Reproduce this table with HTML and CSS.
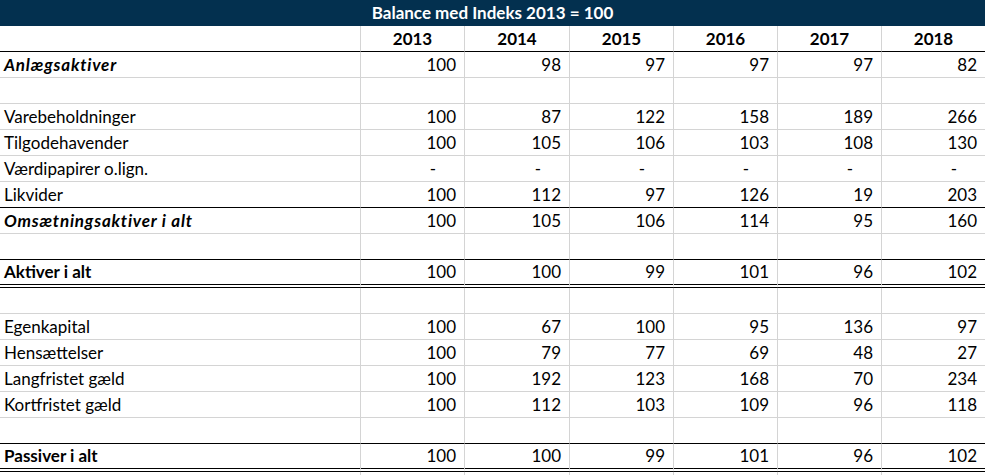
FILE: index.html
```html
<!DOCTYPE html>
<html lang="da">
<head>
<meta charset="utf-8">
<title>Balance med Indeks 2013 = 100</title>
<link rel="stylesheet" href="styles.css">
</head>
<body>
<div class="sheet">
  <div class="title">Balance med Indeks 2013 = 100</div>
  <table class="grid">
    <thead>
      <tr class="rule">
        <th class="label"></th><th>2013</th><th>2014</th><th>2015</th><th>2016</th><th>2017</th><th>2018</th>
      </tr>
    </thead>
    <tbody>
      <tr class="bi">
        <td class="label">Anlægsaktiver</td><td>100</td><td>98</td><td>97</td><td>97</td><td>97</td><td>82</td>
      </tr>
      <tr>
        <td class="label"></td><td></td><td></td><td></td><td></td><td></td><td></td>
      </tr>
      <tr>
        <td class="label">Varebeholdninger</td><td>100</td><td>87</td><td>122</td><td>158</td><td>189</td><td>266</td>
      </tr>
      <tr>
        <td class="label">Tilgodehavender</td><td>100</td><td>105</td><td>106</td><td>103</td><td>108</td><td>130</td>
      </tr>
      <tr class="dashes">
        <td class="label">Værdipapirer o.lign.</td><td>-</td><td>-</td><td>-</td><td>-</td><td>-</td><td>-</td>
      </tr>
      <tr class="rule">
        <td class="label">Likvider</td><td>100</td><td>112</td><td>97</td><td>126</td><td>19</td><td>203</td>
      </tr>
      <tr class="bi">
        <td class="label">Omsætningsaktiver i alt</td><td>100</td><td>105</td><td>106</td><td>114</td><td>95</td><td>160</td>
      </tr>
      <tr class="rule">
        <td class="label"></td><td></td><td></td><td></td><td></td><td></td><td></td>
      </tr>
      <tr class="b double">
        <td class="label">Aktiver i alt</td><td>100</td><td>100</td><td>99</td><td>101</td><td>96</td><td>102</td>
      </tr>
      <tr>
        <td class="label"></td><td></td><td></td><td></td><td></td><td></td><td></td>
      </tr>
      <tr>
        <td class="label">Egenkapital</td><td>100</td><td>67</td><td>100</td><td>95</td><td>136</td><td>97</td>
      </tr>
      <tr>
        <td class="label">Hensættelser</td><td>100</td><td>79</td><td>77</td><td>69</td><td>48</td><td>27</td>
      </tr>
      <tr>
        <td class="label">Langfristet gæld</td><td>100</td><td>192</td><td>123</td><td>168</td><td>70</td><td>234</td>
      </tr>
      <tr>
        <td class="label">Kortfristet gæld</td><td>100</td><td>112</td><td>103</td><td>109</td><td>96</td><td>118</td>
      </tr>
      <tr class="rule">
        <td class="label"></td><td></td><td></td><td></td><td></td><td></td><td></td>
      </tr>
      <tr class="b double">
        <td class="label">Passiver i alt</td><td>100</td><td>100</td><td>99</td><td>101</td><td>96</td><td>102</td>
      </tr>
      <tr>
        <td class="label"></td><td></td><td></td><td></td><td></td><td></td><td></td>
      </tr>
    </tbody>
  </table>
</div>
</body>
</html>
```

FILE: styles.css
```css
html, body {
  margin: 0;
  padding: 0;
  background: #ffffff;
}

body {
  font-family: Lato, "Open Sans", sans-serif;
  font-size: 17px;
  color: #000000;
  overflow: hidden;
}

.sheet {
  width: 985px;
}

.title {
  height: 26px;
  box-sizing: border-box;
  background: #03304f;
  color: #ffffff;
  font-weight: 700;
  text-align: center;
  line-height: 19px;
  padding-top: 3px;
}

.grid {
  display: grid;
  grid-template-columns: 361px 104px 105px 104px 104px 104px 103px;
  width: 985px;
}

.grid thead,
.grid tbody,
.grid tr {
  display: contents;
}

.grid th,
.grid td {
  display: flex;
  align-items: flex-end;
  justify-content: flex-end;
  box-sizing: border-box;
  height: 26px;
  padding: 0 8px 3px 8px;
  line-height: 19px;
  border-bottom: 1px solid #d4d4d4;
  border-right: 1px solid #d4d4d4;
  font-weight: 400;
  white-space: nowrap;
}

.grid th:last-child,
.grid td:last-child {
  border-right: none;
}

.grid th {
  justify-content: center;
  font-weight: 700;
}

.grid .label {
  justify-content: flex-start;
  padding-left: 4px;
}

.grid .rule > th,
.grid .rule > td {
  border-bottom-color: #000000;
}

.grid .double > td {
  height: 28px;
  border-bottom: 4px double #000000;
}

.grid .bi > .label {
  font-weight: 700;
  font-style: italic;
  letter-spacing: 0.8px;
}

.grid .b > .label {
  font-weight: 700;
}

.grid .dashes > td:not(.label) {
  padding-right: 28px;
}
```
